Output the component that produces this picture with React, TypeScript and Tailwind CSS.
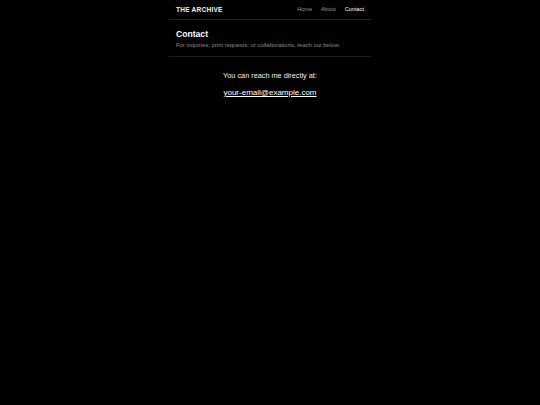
export default function App() {
  return (
    <div
      className="min-h-[405px] w-full bg-black text-white"
      style={{ fontFamily: '"Liberation Sans", Arial, sans-serif' }}
    >
      <div className="mx-auto w-[202px]">
        <header className="flex h-[20px] items-center justify-between border-b border-[#1f1f1f] px-[7px]">
          <span className="text-[6.6px] font-bold tracking-[0.03em] text-[#f2f2f2]">THE ARCHIVE</span>
          <nav className="flex items-center gap-[9px] text-[5.6px]">
            <a className="text-[#9a9a9a]">Home</a>
            <a className="text-[#9a9a9a]">About</a>
            <a className="text-white">Contact</a>
          </nav>
        </header>
        <section className="border-b border-[#1f1f1f] px-[7px] pb-[7px] pt-[8px]">
          <h1 className="text-[8.6px] font-bold leading-[12px]">Contact</h1>
          <p className="mt-[1px] text-[5.9px] leading-[8px] text-[#8a8a8a]">
            For inquiries, print requests, or collaborations, reach out below.
          </p>
        </section>
        <main className="flex flex-col items-center pt-[14px]">
          <p className="text-[7.3px] leading-[10px] text-[#f0f0f0]">You can reach me directly at:</p>
          <a className="mt-[7px] text-[8px] leading-[10px] text-white underline underline-offset-[1px]">
            your-email@example.com
          </a>
        </main>
      </div>
    </div>
  );
}
